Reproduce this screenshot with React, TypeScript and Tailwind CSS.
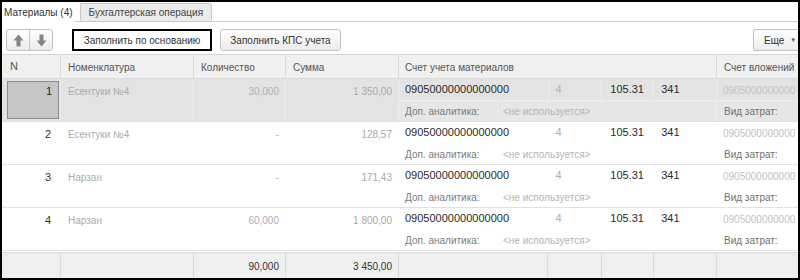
import React from "react";

type Row = {
  n: number;
  name: string;
  qty: string;
  sum: string;
  selected?: boolean;
};

const rows: Row[] = [
  { n: 1, name: "Есентуки №4", qty: "30,000", sum: "1 350,00", selected: true },
  { n: 2, name: "Есентуки №4", qty: "-", sum: "128,57" },
  { n: 3, name: "Нарзан", qty: "-", sum: "171,43" },
  { n: 4, name: "Нарзан", qty: "60,000", sum: "1 800,00" },
];

function ArrowUp() {
  return (
    <svg width="11" height="13" viewBox="0 0 11 13">
      <polygon points="5.5,0.5 10.5,6.5 7.5,6.5 7.5,12.5 3.5,12.5 3.5,6.5 0.5,6.5" fill="#858585" />
    </svg>
  );
}

function ArrowDown() {
  return (
    <svg width="11" height="13" viewBox="0 0 11 13">
      <polygon points="5.5,12.5 10.5,6.5 7.5,6.5 7.5,0.5 3.5,0.5 3.5,6.5 0.5,6.5" fill="#858585" />
    </svg>
  );
}

function DataRow({ row }: { row: Row }) {
  const sel = row.selected;
  const sep = sel ? "border-[#eeeeee]" : "border-transparent";
  return (
    <div className={`flex h-[43px] border-b border-[#e2e2e2] ${sel ? "bg-[#e3e3e3]" : "bg-white"}`}>
      {/* N */}
      <div className="w-[58px] shrink-0 p-[2px_1px_2px_5px]">
        {sel ? (
          <div className="h-full border border-[#8e8e8e] bg-[#c6c6c6] pr-[6px] pt-[3px] text-right text-[11px] text-[#222]">{row.n}</div>
        ) : (
          <div className="pr-[8px] pt-[4px] text-right text-[11px] text-[#333]">{row.n}</div>
        )}
      </div>
      <div className={`w-[133px] shrink-0 border-l ${sep} pl-[7px] pt-[6px] text-[#ababab]`}>{row.name}</div>
      <div className={`w-[92px] shrink-0 border-l ${sep} pr-[6px] pt-[6px] text-right text-[#b0b0b0]`}>{row.qty}</div>
      <div className={`w-[113px] shrink-0 border-l ${sep} pr-[6px] pt-[6px] text-right text-[#a8a8a8]`}>{row.sum}</div>
      {/* Счет учета материалов */}
      <div className={`flex w-[318px] shrink-0 flex-col border-l ${sep}`}>
        <div className="flex h-[21px] items-center text-[11px]">
          <div className="w-[149px] pl-[6px] text-[#2a2a2a]">09050000000000000</div>
          <div className={`h-full w-[54px] border-l ${sep} pl-[7px] pt-[4px] text-[#b0b0b0]`}>4</div>
          <div className={`h-full w-[52px] border-l ${sep} pl-[8px] pt-[4px] text-[#2a2a2a]`}>105.31</div>
          <div className={`h-full w-[63px] border-l ${sep} pl-[7px] pt-[4px] text-[#2a2a2a]`}>341</div>
        </div>
        <div className={`flex h-[21px] items-center border-t ${sel ? "border-[#eeeeee] bg-[#e6e6e6]" : "border-transparent"}`}>
          <div className={`h-full w-[99px] border-r ${sep} pl-[6px] pt-[4px] text-[#7c7c7c]`}>Доп. аналитика:</div>
          <div className="pl-[5px] text-[10px] text-[#b4b4b4]">&lt;не используется&gt;</div>
        </div>
      </div>
      {/* Счет вложений */}
      <div className={`flex flex-1 flex-col overflow-hidden border-l ${sep}`}>
        <div className="h-[21px] whitespace-nowrap pl-[6px] pt-[5px] text-[10px] text-[#c2c2c2]">0905000000000</div>
        <div className={`h-[21px] border-t ${sel ? "border-[#eeeeee] bg-[#e6e6e6]" : "border-transparent"} pl-[7px] pt-[4px] text-[#707070]`}>Вид затрат:</div>
      </div>
    </div>
  );
}

export default function App() {
  return (
    <div className="h-[280px] w-[800px] overflow-hidden border-2 border-black bg-white font-['Liberation_Sans',Arial,sans-serif] text-[10px] leading-[13px] text-[#333]">
      {/* Вкладки */}
      <div className="flex h-[20px] items-end">
        <div className="flex h-[20px] items-center px-[2px] text-[#333]">Материалы (4)</div>
        <div className="w-[5px] self-stretch border-b border-[#cccccc]" />
        <div className="flex h-[19px] items-center rounded-t-[2px] border border-[#c8c8c8] bg-[#ebebeb] px-[8px] text-[#444]">
          Бухгалтерская операция
        </div>
        <div className="flex-1 self-stretch border-b border-[#cccccc]" />
      </div>

      {/* Панель команд */}
      <div className="mt-[7px] flex h-[22px] items-center pl-[4px] pr-0">
        <div className="flex h-[22px] overflow-hidden rounded-[3px] border border-[#c2c2c2] bg-gradient-to-b from-white to-[#ececec]">
          <div className="flex w-[23px] items-center justify-center border-r border-[#c8c8c8]">
            <ArrowUp />
          </div>
          <div className="flex w-[22px] items-center justify-center">
            <ArrowDown />
          </div>
        </div>
        <button className="ml-[19px] flex h-[22px] w-[140px] items-center justify-center border-2 border-black bg-white text-[#333]">
          Заполнить по основанию
        </button>
        <button className="ml-[8px] flex h-[22px] w-[121px] items-center justify-center rounded-[3px] border border-[#c2c2c2] bg-gradient-to-b from-white to-[#ececec] text-[#333]">
          Заполнить КПС учета
        </button>
        <div className="flex-1" />
        <button className="flex h-[22px] w-[45px] items-center rounded-l-[3px] border border-r-0 border-[#c2c2c2] bg-gradient-to-b from-white to-[#ececec] pl-[10px] text-[#333]">
          Еще
          <span className="ml-[6px] text-[6px] text-[#555]">▼</span>
        </button>
      </div>

      {/* Таблица */}
      <div className="mt-[3px] border-t border-[#d6d6d6]">
        <div className="flex h-[24px] items-center border-b border-[#dadada] bg-[#f0f0f0] text-[#555]">
          <div className="w-[58px] shrink-0 pl-[8px] text-[11px]">N</div>
          <div className="h-full w-[133px] shrink-0 border-l border-[#dadada] pl-[7px] pt-[6px]">Номенклатура</div>
          <div className="h-full w-[92px] shrink-0 border-l border-[#dadada] pl-[7px] pt-[6px]">Количество</div>
          <div className="h-full w-[113px] shrink-0 border-l border-[#dadada] pl-[7px] pt-[6px]">Сумма</div>
          <div className="h-full w-[318px] shrink-0 border-l border-[#dadada] pl-[6px] pt-[6px]">Счет учета материалов</div>
          <div className="h-full flex-1 whitespace-nowrap border-l border-[#dadada] pl-[7px] pt-[6px]">Счет вложений</div>
        </div>

        {rows.map((r) => (
          <DataRow key={r.n} row={r} />
        ))}

        {/* Итоги */}
        <div className="mt-[1px] flex h-[26px] border-t border-[#dcdcdc] bg-[#efefef] text-[#333]">
          <div className="w-[58px] shrink-0" />
          <div className="w-[133px] shrink-0 border-l border-[#dadada]" />
          <div className="w-[92px] shrink-0 border-l border-[#dadada] pr-[6px] pt-[7px] text-right">90,000</div>
          <div className="w-[113px] shrink-0 border-l border-[#dadada] pr-[6px] pt-[7px] text-right">3 450,00</div>
          <div className="w-[149px] shrink-0 border-l border-[#dadada]" />
          <div className="w-[54px] shrink-0 border-l border-[#dadada]" />
          <div className="w-[52px] shrink-0 border-l border-[#dadada]" />
          <div className="w-[63px] shrink-0 border-l border-[#dadada]" />
          <div className="flex-1 border-l border-[#dadada]" />
        </div>
      </div>
    </div>
  );
}
